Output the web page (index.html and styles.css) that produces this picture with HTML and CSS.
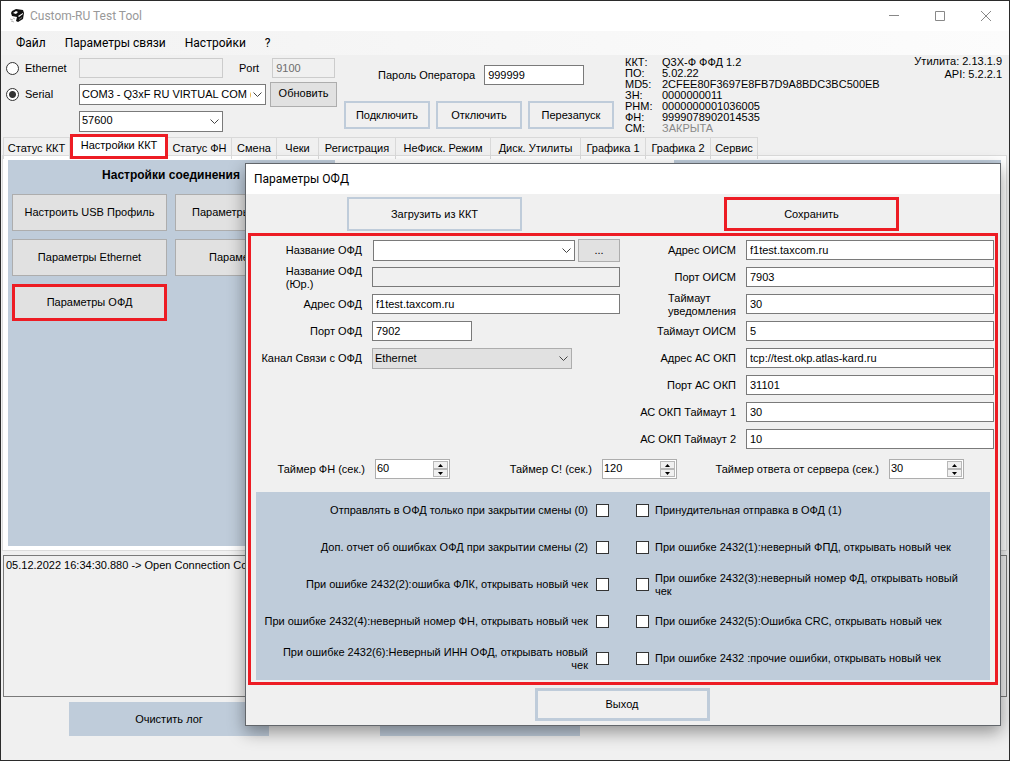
FILE: index.html
```html
<!DOCTYPE html>
<html lang="ru">
<head>
<meta charset="utf-8">
<title>Custom-RU Test Tool</title>
<link rel="stylesheet" href="styles.css">
</head>
<body>
<div class="window">
  <header class="titlebar">
    <svg class="logo" width="16" height="16" viewBox="0 0 16 16"><path d="M3 3l4-2 7 1 1 3-1 6-5 3-2-1 1-4-5-1-1-3z" fill="#111"/><path d="M4 5l3-2 2 1-2 2zM9 8l5-3v1L10 9z" fill="#fff"/><path d="M10 11l3-2v1l-3 2z" fill="#777"/><path d="M1 11l3 1M2 13l3 1M4 10l2 1" stroke="#bbb"/></svg>
    <span class="app-name">Custom-RU Test Tool</span>
    <button class="win-btn" aria-label="Свернуть"><svg width="12" height="12"><path d="M1 5.500h10" stroke="#888"/></svg></button>
    <button class="win-btn" aria-label="Развернуть"><svg width="12" height="12"><path d="M1.500 1.500h9v9h-9z" fill="none" stroke="#888"/></svg></button>
    <button class="win-btn" aria-label="Закрыть"><svg width="12" height="12"><path d="M1 1l10 10M11 1L1 11" stroke="#888"/></svg></button>
  </header>
  <nav class="menu">
    <button>Файл</button><button>Параметры связи</button><button>Настройки</button><button>?</button>
  </nav>

  <section class="top">
    <div class="connection">
      <div class="conn-row">
        <label class="radio"><input type="radio" name="conn">Ethernet</label>
        <input class="field host" type="text" aria-label="Адрес" disabled>
        <label class="port-label" for="port">Port</label>
        <input class="field port" id="port" type="text" value="9100" disabled>
      </div>
      <div class="conn-row serial">
        <label class="radio"><input type="radio" name="conn" checked>Serial</label>
        <span class="combo com"><select aria-label="COM порт"><option>COM3 - Q3xF RU VIRTUAL COM (</option></select><svg class="chev" width="9" height="6"><path d="M.5.5l4 4 4-4" fill="none" stroke="#444"/></svg></span>
        <button class="btn refresh">Обновить</button>
      </div>
      <div class="conn-row baud-row">
        <span class="combo baud"><select aria-label="Скорость"><option>57600</option></select><svg class="chev" width="9" height="6"><path d="M.5.5l4 4 4-4" fill="none" stroke="#444"/></svg></span>
      </div>
    </div>
    <div class="operator">
      <div class="password"><label for="pwd">Пароль Оператора</label><input class="field" id="pwd" type="text" value="999999"></div>
      <div class="actions"><button class="btn-line">Подключить</button><button class="btn-line">Отключить</button><button class="btn-line">Перезапуск</button></div>
    </div>
    <dl class="info">
      <dt>ККТ:</dt><dd>Q3X-Ф ФФД 1.2</dd>
      <dt>ПО:</dt><dd>5.02.22</dd>
      <dt>MD5:</dt><dd>2CFEE80F3697E8FB7D9A8BDC3BC500EB</dd>
      <dt>ЗН:</dt><dd>0000000011</dd>
      <dt>РНМ:</dt><dd>0000000001036005</dd>
      <dt>ФН:</dt><dd>9999078902014535</dd>
      <dt>СМ:</dt><dd class="closed">ЗАКРЫТА</dd>
    </dl>
    <div class="version">Утилита: 2.13.1.9<br>API: 5.2.2.1</div>
  </section>

  <div class="tabs" role="tablist">
    <button role="tab">Статус ККТ</button><button role="tab" class="active" aria-selected="true">Настройки ККТ</button><button role="tab">Статус ФН</button><button role="tab">Смена</button><button role="tab">Чеки</button><button role="tab">Регистрация</button><button role="tab">НеФиск. Режим</button><button role="tab">Диск. Утилиты</button><button role="tab">Графика 1</button><button role="tab">Графика 2</button><button role="tab">Сервис</button>
  </div>
  <main class="page">
    <section class="panel">
      <h2>Настройки соединения</h2>
      <div class="panel-grid">
        <button class="btn">Настроить USB Профиль</button><button class="btn cut">Параметры</button>
        <button class="btn">Параметры Ethernet</button><button class="btn cut deep">Параметры</button>
        <button class="btn marked">Параметры ОФД</button>
      </div>
    </section>
    <section class="panel"></section>
  </main>
  <div class="log">05.12.2022 16:34:30.880 -&gt; Open Connection Com</div>
  <footer class="footer"><button class="btn-fill">Очистить лог</button><button class="btn-fill" aria-label="Лог"></button></footer>

  <div class="dialog" role="dialog" aria-labelledby="dlg-title">
    <h1 class="dialog-title" id="dlg-title">Параметры ОФД</h1>
    <div class="dialog-actions"><button class="btn-line">Загрузить из ККТ</button><button class="btn-line marked">Сохранить</button></div>
    <form class="frame">
      <div class="columns">
        <div class="col left">
          <div class="row"><label for="f1">Название ОФД</label><div class="pair"><span class="combo"><select id="f1"><option></option></select><svg class="chev" width="9" height="6"><path d="M.5.5l4 4 4-4" fill="none" stroke="#444"/></svg></span><button type="button" class="btn more">...</button></div></div>
          <div class="row"><label for="f2"><span class="two">Название ОФД<br>(Юр.)</span></label><input class="field readonly" id="f2" type="text" readonly></div>
          <div class="row"><label for="f3">Адрес ОФД</label><input class="field" id="f3" type="text" value="f1test.taxcom.ru"></div>
          <div class="row"><label for="f4">Порт ОФД</label><input class="field short" id="f4" type="text" value="7902"></div>
          <div class="row"><label for="f5">Канал Связи с ОФД</label><span class="combo gray"><select id="f5"><option>Ethernet</option></select><svg class="chev" width="9" height="6"><path d="M.5.5l4 4 4-4" fill="none" stroke="#444"/></svg></span></div>
        </div>
        <div class="col right">
          <div class="row"><label for="g1">Адрес ОИСМ</label><input class="field" id="g1" type="text" value="f1test.taxcom.ru"></div>
          <div class="row"><label for="g2">Порт ОИСМ</label><input class="field" id="g2" type="text" value="7903"></div>
          <div class="row"><label for="g3"><span class="two">Таймаут<br>уведомления</span></label><input class="field" id="g3" type="text" value="30"></div>
          <div class="row"><label for="g4">Таймаут ОИСМ</label><input class="field" id="g4" type="text" value="5"></div>
          <div class="row"><label for="g5">Адрес АС ОКП</label><input class="field" id="g5" type="text" value="tcp://test.okp.atlas-kard.ru"></div>
          <div class="row"><label for="g6">Порт АС ОКП</label><input class="field" id="g6" type="text" value="31101"></div>
          <div class="row"><label for="g7">АС ОКП Таймаут 1</label><input class="field" id="g7" type="text" value="30"></div>
          <div class="row"><label for="g8">АС ОКП Таймаут 2</label><input class="field" id="g8" type="text" value="10"></div>
        </div>
      </div>
      <div class="timers">
        <div class="timer"><label for="t1">Таймер ФН (сек.)</label><span class="spin"><input id="t1" type="text" value="60"><span class="arrows"><button type="button" aria-label="Больше"><svg width="5" height="3"><path d="M0 3h5L2.500 0z"/></svg></button><button type="button" aria-label="Меньше"><svg width="5" height="3"><path d="M0 0h5L2.500 3z"/></svg></button></span></span></div>
        <div class="timer"><label for="t2">Таймер С! (сек.)</label><span class="spin"><input id="t2" type="text" value="120"><span class="arrows"><button type="button" aria-label="Больше"><svg width="5" height="3"><path d="M0 3h5L2.500 0z"/></svg></button><button type="button" aria-label="Меньше"><svg width="5" height="3"><path d="M0 0h5L2.500 3z"/></svg></button></span></span></div>
        <div class="timer"><label for="t3">Таймер ответа от сервера (сек.)</label><span class="spin"><input id="t3" type="text" value="30"><span class="arrows"><button type="button" aria-label="Больше"><svg width="5" height="3"><path d="M0 3h5L2.500 0z"/></svg></button><button type="button" aria-label="Меньше"><svg width="5" height="3"><path d="M0 0h5L2.500 3z"/></svg></button></span></span></div>
      </div>
      <div class="checks">
        <label class="before">Отправлять в ОФД только при закрытии смены (0)<input type="checkbox"></label>
        <label><input type="checkbox">Принудительная отправка в ОФД (1)</label>
        <label class="before">Доп. отчет об ошибках ОФД при закрытии смены (2)<input type="checkbox"></label>
        <label><input type="checkbox">При ошибке 2432(1):неверный ФПД, открывать новый чек</label>
        <label class="before">При ошибке 2432(2):ошибка ФЛК, открывать новый чек<input type="checkbox"></label>
        <label><input type="checkbox"><span>При ошибке 2432(3):неверный номер ФД, открывать новый<br>чек</span></label>
        <label class="before">При ошибке 2432(4):неверный номер ФН, открывать новый чек<input type="checkbox"></label>
        <label><input type="checkbox">При ошибке 2432(5):Ошибка CRC, открывать новый чек</label>
        <label class="before"><span>При ошибке 2432(6):Неверный ИНН ОФД, открывать новый<br>чек</span><input type="checkbox"></label>
        <label><input type="checkbox">При ошибке 2432 :прочие ошибки, открывать новый чек</label>
      </div>
    </form>
    <div class="dialog-footer"><button class="btn-line">Выход</button></div>
  </div>
</div>
</body>
</html>
```
FILE: styles.css
```css
* { box-sizing: border-box; }
body { margin: 0; font: 11px/13px "Liberation Sans", Arial, sans-serif; color: #000; }
button, input, select { font: inherit; color: inherit; margin: 0; padding: 0; border-radius: 0; }
button { border: 0; background: none; white-space: nowrap; }
.window { position: relative; min-height: 100vh; background: #f0f0f0; border: 1px solid #2b2b2b; overflow: hidden; }

.titlebar { display: flex; align-items: center; height: 30px; padding-left: 8px; background: #fff; }
.app-name { flex: 1; margin-left: 5px; font: 12px/16px Roboto, sans-serif; color: #999; }
.win-btn { width: 46px; height: 30px; display: grid; place-items: center; }
.menu { display: flex; gap: 19px; height: 24px; padding-left: 15px; background: linear-gradient(90deg, #f2f2f2, #fcfcfc); }
.menu button { font: 12px/24px Roboto, sans-serif; }

.field { width: 100%; height: 20px; padding: 0 3px 1px; border: 1px solid #7a7a7a; background: #fff; }
.field:disabled { background: #f0f0f0; border-color: #ccc; color: #6d6d6d; }
.readonly { background: #f0f0f0; }
.combo { position: relative; display: block; height: 21px; }
.combo select { appearance: none; display: block; width: 100%; height: 100%; padding: 0 14px 1px 2px; border: 1px solid #7a7a7a; background: #fff; }
.combo.gray select { background: #e1e1e1; border-color: #adadad; padding-top: 1px; }
.chev { position: absolute; right: 4px; top: 8px; }
.btn { border: 1px solid #adadad; background: #e1e1e1; }
.btn-line { border: 2px solid #bfccda; }
.btn-fill { width: 200px; height: 34px; background: #bfccda; }
.btn.marked, .btn-line.marked { border: 3px solid #ed1c24; }

.top { display: flex; height: 82px; }
.connection { width: 343px; padding: 3px 0 0 5px; }
.conn-row { display: flex; align-items: center; height: 20px; }
.conn-row.serial { height: 25px; margin: 4px 0; }
.radio { width: 73px; display: flex; align-items: center; gap: 6px; }
.radio input, .checks input { appearance: none; flex: none; width: 13px; height: 13px; border: 1px solid #333; background: #fff; }
.radio input { border-radius: 50%; }
.radio input:checked { background: radial-gradient(circle, #333 0 3px, #fff 4px); }
.field.host { width: 144px; }
.port-label { margin: 0 13px 0 16px; }
.field.port { width: 63px; }
.com { width: 187px; }
.refresh { width: 67px; height: 25px; margin-left: 4px; padding-bottom: 3px; }
.baud-row { padding-left: 73px; }
.baud { width: 144px; }
.operator { width: 281px; padding-top: 10px; }
.password { display: flex; align-items: center; gap: 9px; padding-left: 34px; }
.password .field { width: 100px; }
.actions { display: flex; gap: 6px; margin-top: 16px; }
.actions .btn-line { width: 86px; height: 28px; }
.info { display: grid; grid-template-columns: 37px auto; align-content: start; margin: 0; padding-top: 2px; line-height: 11px; }
.info dd { margin: 0; }
.closed { color: #888; }
.version { flex: 1; padding: 0 7px; text-align: right; }

.tabs { display: grid; grid-template-columns: 67px 98px 64px 45px 42px 77px 95px 90px 65px 65px 47px; height: 18px; margin-left: 2px; }
.tabs button { padding-bottom: 1px; border: solid #d9d9d9; border-width: 1px 1px 0 0; }
.tabs button:first-child { border-left-width: 1px; }
.tabs .active { position: relative; z-index: 1; height: 25px; margin-top: -3px; padding-bottom: 2px; border: 3px solid #ed1c24; background: #fff; }
.page { display: flex; justify-content: space-between; height: 396px; margin: 0 2px 0 1px; padding: 4px; border: 1px solid #dcdcdc; background: #fff; }
.page .panel { margin: 0 1px; }
.panel { width: 327px; padding: 9px 5px 9px 4px; background: #bfccda; }
.panel h2 { margin: 0 0 12px; font-size: 12px; line-height: 13px; text-align: center; }
.panel-grid { display: grid; grid-template-columns: 1fr 1fr; gap: 8px; }
.panel-grid .btn { height: 37px; }
.panel-grid .cut { padding-left: 16px; text-align: left; }
.panel-grid .deep { padding-left: 33px; }
.log { height: 142px; margin: 4px 2px 0; padding: 2px; border: 1px solid #7a7a7a; line-height: 15px; }
.footer { display: flex; gap: 111px; padding: 5px 68px; }

.dialog { position: absolute; left: 244px; right: 8px; top: 162px; z-index: 2; border: 1px solid #62666b; background: #f0f0f0; box-shadow: 0 6px 16px rgba(0, 0, 0, .4); }
.dialog-title { margin: 0; padding-left: 8px; background: #fff; font: 12px/30px Roboto, sans-serif; }
.dialog-actions { display: flex; justify-content: space-between; padding: 3px 101px 2px; }
.dialog-actions .btn-line { width: 175px; height: 34px; }
.frame { margin: 0 2px; padding: 1px 0 2px; border: 3px solid #ed1c24; }
.columns { display: grid; grid-template-columns: 369fr 374fr; padding-right: 1px; }
.row { display: grid; grid-template-columns: 111px 1fr; gap: 10px; align-items: center; height: 27px; }
.right .row { grid-template-columns: 116px 1fr; }
.row label { text-align: right; }
.row .field { margin-bottom: 1px; }
.two { display: inline-block; text-align: left; }
.pair { display: grid; grid-template-columns: 1fr 42px; gap: 3px; align-items: center; padding-left: 1px; }
.more { height: 23px; }
.field.short { width: 100px; }
.combo.gray { width: 200px; }
.timers { display: grid; grid-template-columns: 199fr 227fr 287fr 31fr; padding: 6px 0 13px; }
.timer { display: flex; align-items: center; justify-content: flex-end; gap: 10px; }
.spin { display: flex; width: 75px; height: 20px; padding-right: 1px; border: 1px solid #adadad; background: #fff; }
.spin input { flex: 1; min-width: 0; padding: 0 1px 1px; border: 0; background: none; }
.arrows { display: grid; grid-template-rows: 1fr 1fr; width: 15px; padding: 1px 0; }
.arrows button { display: grid; place-items: center; border: 1px solid #b8b8b8; background: #f0f0f0; }
.checks { display: grid; grid-template-columns: 1fr 1fr; column-gap: 26px; grid-auto-rows: 37px; margin: 0 5px; padding-bottom: 3px; background: #bfccda; }
.checks label { display: flex; align-items: center; gap: 6px; }
.checks input { margin-bottom: 1px; }
.checks .before { justify-content: flex-end; gap: 8px; padding-right: 1px; text-align: right; white-space: nowrap; }
.dialog-footer { display: flex; justify-content: center; padding: 3px 2px 4px 0; }
.dialog-footer .btn-line { width: 175px; height: 33px; border-width: 3px; }
```
